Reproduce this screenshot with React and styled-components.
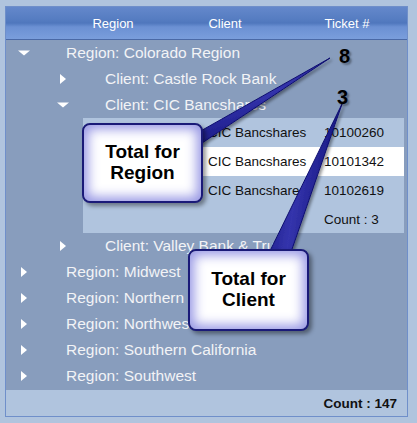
import React from 'react'
import styled, { createGlobalStyle } from 'styled-components'

const GlobalStyle = createGlobalStyle`
  body {
    margin: 0;
    background: #b0c4de;
    font-family: "Liberation Sans", Arial, sans-serif;
  }
`

const Page = styled.div`
  position: relative;
  width: 417px;
  height: 423px;
  padding: 6px 0 0 5px;
  box-sizing: border-box;
  overflow: hidden;
`

const Grid = styled.div`
  width: 403px;
  height: 411px;
  border: 1px solid #6f8fca;
  box-sizing: border-box;
  display: flex;
  flex-direction: column;
  background: #b0c4de;
`

const Header = styled.div`
  height: 33px;
  box-sizing: border-box;
  display: grid;
  grid-template-columns: 59px 96px 128px 116px;
  align-items: center;
  background: linear-gradient(#6488cb 0%, #557cc1 40%, #4f77bd 50%, #6b90d3 62%, #7a9edc 100%);
  border-bottom: 1px solid #4a69a6;
  color: #fff;
  font-size: 13px;
  text-align: center;
`

const Body = styled.div`
  height: 350px;
  background: #889dbd;
  display: flex;
  flex-direction: column;
`

const TreeRow = styled.div`
  height: 26px;
  flex: none;
  display: flex;
  align-items: center;
  padding-left: ${p => 12 + p.$depth * 39}px;
  color: #f2f3f6;
  font-size: 15.5px;
`

const ArrowBox = styled.svg`
  width: 12px;
  height: 10px;
  margin-right: 36px;
  flex: none;
`

const Detail = styled.div`
  margin: 0 3px 0 77px;
  background: #b0c4de;
  display: flex;
  flex-direction: column;
`

const DetailRow = styled.div`
  height: ${p => (p.$short ? 28 : 29)}px;
  display: grid;
  grid-template-columns: 125px 116px 1fr;
  align-items: center;
  font-size: 13.5px;
  color: #111;
  background: ${p => (p.$selected ? '#ffffff' : 'transparent')};
`

const Footer = styled.div`
  flex: 1;
  display: flex;
  align-items: center;
  justify-content: flex-end;
  padding-right: 10px;
  font-weight: bold;
  font-size: 13.5px;
  color: #111;
`

const Pointers = styled.svg`
  position: absolute;
  left: 0;
  top: 0;
  width: 417px;
  height: 423px;
  pointer-events: none;
`

const Bubble = styled.div`
  position: absolute;
  left: ${p => p.$x}px;
  top: ${p => p.$y}px;
  width: 121px;
  height: ${p => p.$h}px;
  box-sizing: border-box;
  border: 2px solid #1a1a78;
  border-radius: 8px;
  background: #fff;
  box-shadow: inset 0 0 12px 4px #9696e4, 3px 3px 4px rgba(0, 0, 0, 0.4);
  display: flex;
  flex-direction: column;
  justify-content: center;
  align-items: center;
  font-weight: bold;
  font-size: 19px;
  line-height: 21px;
  color: #000;
  padding-bottom: 3px;
`

const Num = styled.span`
  position: absolute;
  left: ${p => p.$x}px;
  top: ${p => p.$y}px;
  font-weight: bold;
  font-size: 20px;
  color: #000;
  text-shadow: 2px 2px 2px rgba(0, 0, 0, 0.35);
`

const Arrow = ({ open }) => (
  <ArrowBox viewBox="0 0 12 10">
    {open
      ? <polygon points="0,2.5 12,2.5 6,7.5" fill="#fff" />
      : <polygon points="3,0 9,5 3,10" fill="#fff" />}
  </ArrowBox>
)

const Node = ({ depth, open, children }) => (
  <TreeRow $depth={depth}>
    <Arrow open={open} />
    <span>{children}</span>
  </TreeRow>
)

const tickets = [
  { client: 'CIC Bancshares', id: '10100260' },
  { client: 'CIC Bancshares', id: '10101342', selected: true },
  { client: 'CIC Bancshares', id: '10102619' },
]

const regions = ['Midwest', 'Northern', 'Northwest', 'Southern California', 'Southwest']

export default function App() {
  return (
    <Page>
      <GlobalStyle />
      <Grid>
        <Header>
          <span />
          <span>Region</span>
          <span>Client</span>
          <span>Ticket #</span>
        </Header>
        <Body>
          <Node depth={0} open>Region: Colorado Region</Node>
          <Node depth={1}>Client: Castle Rock Bank</Node>
          <Node depth={1} open>Client: CIC Bancshares</Node>
          <Detail>
            {tickets.map(t => (
              <DetailRow key={t.id} $selected={t.selected}>
                <span />
                <span>{t.client}</span>
                <span>{t.id}</span>
              </DetailRow>
            ))}
            <DetailRow $short>
              <span />
              <span />
              <span>Count : 3</span>
            </DetailRow>
          </Detail>
          <Node depth={1}>Client: Valley Bank &amp; Trust</Node>
          {regions.map(r => (
            <Node key={r} depth={0}>Region: {r}</Node>
          ))}
        </Body>
        <Footer>Count : 147</Footer>
      </Grid>

      <Pointers viewBox="0 0 417 423">
        <defs>
          <linearGradient id="wedgeA" x1="0" y1="0" x2="0.35" y2="1">
            <stop offset="0" stopColor="#12127a" />
            <stop offset="0.5" stopColor="#3434ac" />
            <stop offset="1" stopColor="#12127a" />
          </linearGradient>
          <linearGradient id="wedgeB" x1="0" y1="0" x2="1" y2="0.3">
            <stop offset="0" stopColor="#12127a" />
            <stop offset="0.5" stopColor="#3434ac" />
            <stop offset="1" stopColor="#12127a" />
          </linearGradient>
          <filter id="shade" x="-20%" y="-20%" width="140%" height="140%">
            <feDropShadow dx="2" dy="2" stdDeviation="1.5" floodOpacity="0.4" />
          </filter>
        </defs>
        <polygon points="330,58 190,137 190,151" fill="url(#wedgeA)" stroke="#101070" strokeWidth="1" filter="url(#shade)" />
        <polygon points="342,104 268,255 290,255" fill="url(#wedgeB)" stroke="#101070" strokeWidth="1" filter="url(#shade)" />
      </Pointers>

      <Bubble $x={82} $y={123} $h={80}>
        <span>Total for</span>
        <span>Region</span>
      </Bubble>
      <Bubble $x={188} $y={249} $h={82}>
        <span>Total for</span>
        <span>Client</span>
      </Bubble>

      <Num $x={339} $y={45}>8</Num>
      <Num $x={337} $y={86}>3</Num>
    </Page>
  )
}
